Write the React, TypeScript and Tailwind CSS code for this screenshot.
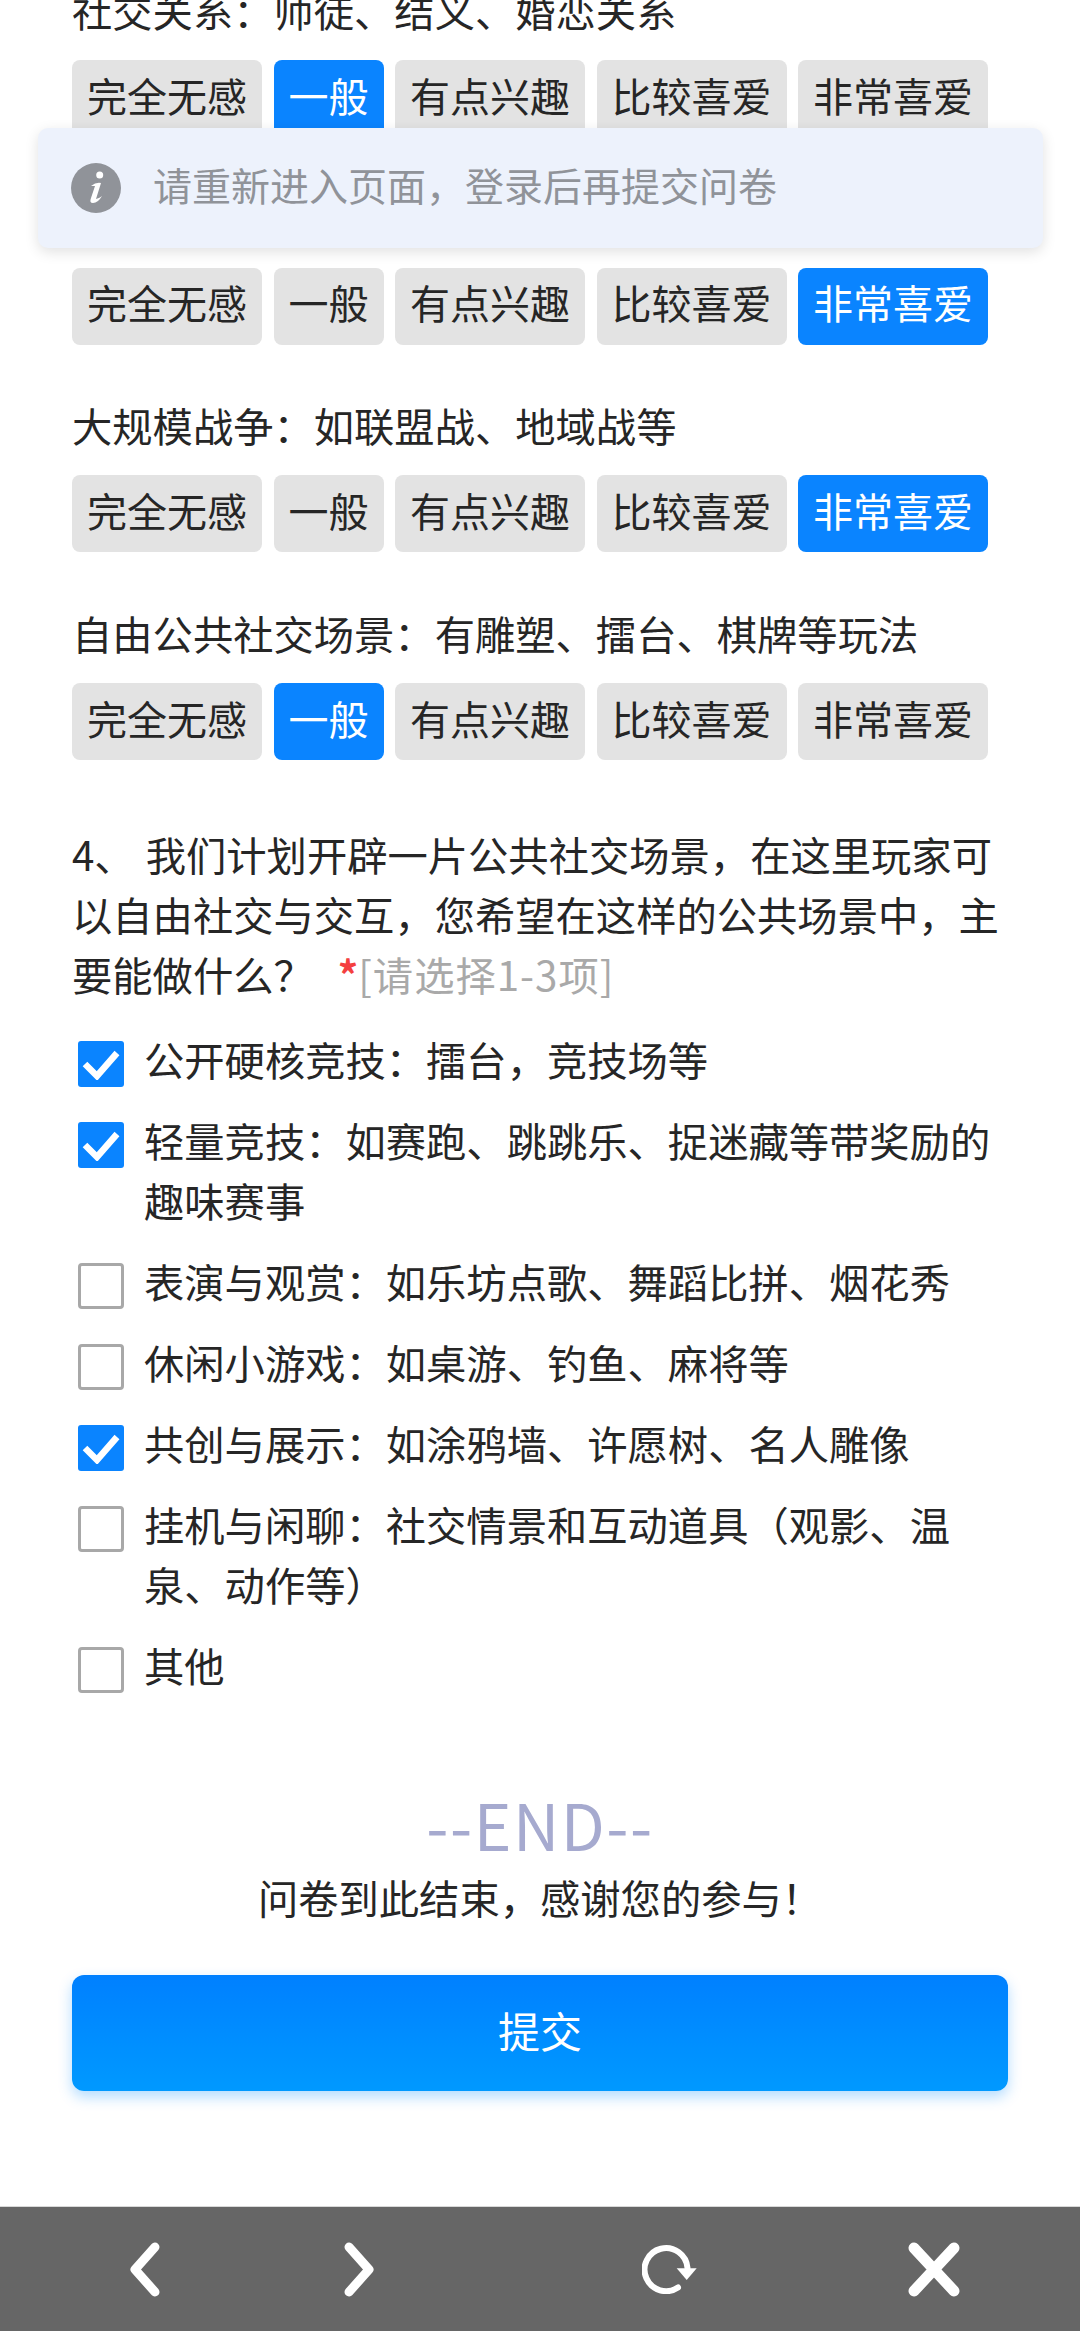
import { useState } from "react";

const levels = ["完全无感", "一般", "有点兴趣", "比较喜爱", "非常喜爱"];

const ratings = [
  { label: "社交关系\uFF1A师徒、结义、婚恋关系", picked: 1 },
  { label: "", picked: 4 },
  { label: "大规模战争\uFF1A如联盟战、地域战等", picked: 4 },
  { label: "自由公共社交场景\uFF1A有雕塑、擂台、棋牌等玩法", picked: 1 },
];

const options = [
  { text: "公开硬核竞技\uFF1A擂台\uFF0C竞技场等", checked: true },
  { text: "轻量竞技\uFF1A如赛跑、跳跳乐、捉迷藏等带奖励的趣味赛事", checked: true },
  { text: "表演与观赏\uFF1A如乐坊点歌、舞蹈比拼、烟花秀", checked: false },
  { text: "休闲小游戏\uFF1A如桌游、钓鱼、麻将等", checked: false },
  { text: "共创与展示\uFF1A如涂鸦墙、许愿树、名人雕像", checked: true },
  { text: "挂机与闲聊\uFF1A社交情景和互动道具\uFF08观影、温泉、动作等\uFF09", checked: false },
  { text: "其他", checked: false },
];

function RatingRow({ label, picked }: { label: string; picked: number }) {
  return (
    <div className="mb-[51.7px]">
      <p className="mb-[19px] h-[60px] whitespace-nowrap leading-[57px]">{label}</p>
      <div className="flex gap-[11.5px] text-[40px]">
        {levels.map((level, i) => (
          <span
            key={level}
            className={
              i === picked
                ? "flex h-[77px] items-center rounded-[8px] bg-[#0a84ff] px-[15px] pb-[8px] text-white"
                : "flex h-[77px] items-center rounded-[8px] bg-[#e3e3e3] px-[15px] pb-[8px]"
            }
          >
            {level}
          </span>
        ))}
      </div>
    </div>
  );
}

function Option({ text, checked }: { text: string; checked: boolean }) {
  return (
    <label className="mb-[24px] flex items-start gap-[20px] pl-[6px]">
      {checked ? (
        <span className="mt-[9px] flex h-[46px] w-[46px] shrink-0 items-center justify-center rounded-[3px] bg-[#0a84ff]">
          <svg width="38" height="32" viewBox="0 0 38 32">
            <path d="M3 16 L15 28 L35 5" fill="none" stroke="#fff" strokeWidth="6.5" />
          </svg>
        </span>
      ) : (
        <span className="mt-[9px] h-[46px] w-[46px] shrink-0 rounded-[4px] border-[3px] border-[#a8a8a8] bg-white" />
      )}
      <span className="-mt-[3px] w-[862px]">{text}</span>
    </label>
  );
}

export default function App() {
  const [showToast] = useState(true);

  return (
    <div
      className="relative h-[2331px] w-[1080px] overflow-hidden bg-white text-[40.3px] leading-[60px] text-[#262626]"
      style={{ fontFamily: '"Noto Sans CJK SC", "Noto Sans", sans-serif' }}
    >
      <div className="-mt-[19px] h-[2225px] px-[72px]">
        {ratings.map((r, i) => (
          <RatingRow key={i} label={r.label} picked={r.picked} />
        ))}

        <p className="mt-[64px] mb-[28px] w-[936px]">
          4、 <span className="ml-[2px]">我们计划开辟一片公共社交场景{"\uFF0C"}在这里玩家可以自由社交与交互{"\uFF0C"}您希望在这样的公共场景中{"\uFF0C"}主要能做什么{"\uFF1F"}</span>
          <span className="ml-[24px] font-bold text-[#f43f3f]">*</span>
          <span className="tracking-[1px] text-[#a9a9a9]">[请选择1-3项]</span>
        </p>

        <div>
          {options.map((o) => (
            <Option key={o.text} text={o.text} checked={o.checked} />
          ))}
        </div>

        <p className="mt-[93px] text-center text-[64px] leading-[70px] tracking-[1.5px] text-[#a6aacf]">--END--</p>
        <p className="mt-[9px] text-center leading-[60px]">问卷到此结束{"\uFF0C"}感谢您的参与{"\uFF01"}</p>
        <button className="mt-[48px] h-[116px] w-[936px] rounded-[12px] bg-gradient-to-b from-[#0080ff] to-[#0099ff] pb-[6px] text-[42px] text-white shadow-[0_6px_14px_rgba(0,140,255,0.3)]">
          提交
        </button>
      </div>

      <div className="flex h-[125px] items-center border-t border-[#d8d8d8] bg-[#666666] pl-[128px]">
        <svg width="34" height="55" viewBox="0 0 34 55">
          <path d="M27 5 L7 27.5 L27 50" fill="none" stroke="#fff" strokeWidth="9" strokeLinecap="round" strokeLinejoin="round" />
        </svg>
        <svg className="ml-[180px]" width="34" height="55" viewBox="0 0 34 55">
          <path d="M7 5 L27 27.5 L7 50" fill="none" stroke="#fff" strokeWidth="9" strokeLinecap="round" strokeLinejoin="round" />
        </svg>
        <svg className="ml-[266px]" width="56" height="50" viewBox="0 0 56 50">
          <path d="M36 43.5 A21.5 21.5 0 1 1 45.5 24" fill="none" stroke="#fff" strokeWidth="6" strokeLinecap="round" />
          <path d="M34.7 24.3 H54.7 L44.7 36 Z" fill="#fff" />
        </svg>
        <svg className="ml-[209px]" width="54" height="55" viewBox="0 0 54 55">
          <path d="M7 6 L47 49 M47 6 L7 49" fill="none" stroke="#fff" strokeWidth="11" strokeLinecap="round" />
        </svg>
      </div>

      {showToast && (
        <div className="absolute top-[128px] left-[38px] flex h-[120px] w-[1005px] items-center rounded-[10px] bg-[#edf2fc] pl-[33px] shadow-[0_4px_14px_rgba(0,0,0,0.12)]">
          <svg width="50" height="50" viewBox="0 0 50 50">
            <circle cx="25" cy="25" r="25" fill="#909399" />
            <circle cx="28.7" cy="12" r="3.5" fill="#fff" />
            <path d="M20 23 Q25 19 30 20 L25 36 Q29 35 31 33 Q27 40 22 40 Q18 40 20 35 L24 23 Q22 23 20 23 Z" fill="#fff" />
          </svg>
          <span className="ml-[32px] pb-[8px] text-[39px] leading-none text-[#909399]">请重新进入页面{"\uFF0C"}登录后再提交问卷</span>
        </div>
      )}
    </div>
  );
}
